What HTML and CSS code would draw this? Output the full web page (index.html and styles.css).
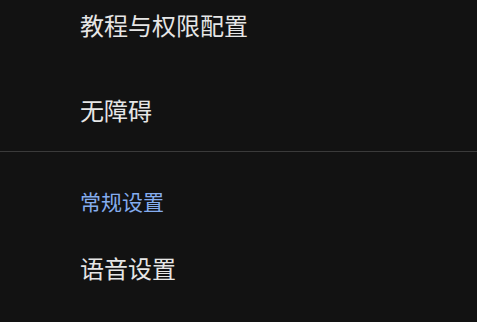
FILE: index.html
```html
<!DOCTYPE html>
<html lang="zh-CN">
<head>
<meta charset="utf-8">
<title>设置</title>
<link rel="stylesheet" href="styles.css">
</head>
<body>
<div class="settings">
  <div class="group">
    <div class="item item-first">教程与权限配置</div>
    <div class="item item-last">无障碍</div>
  </div>
  <div class="divider"></div>
  <div class="group">
    <div class="header">常规设置</div>
    <div class="item">语音设置</div>
  </div>
</div>
</body>
</html>
```
FILE: styles.css
```css
html, body {
  margin: 0;
  padding: 0;
  background: #121212;
}
body {
  width: 477px;
  height: 322px;
  overflow: hidden;
  font-family: "Noto Sans CJK SC", "Noto Sans", sans-serif;
}
.settings {
  display: flex;
  flex-direction: column;
}
.group {
  display: flex;
  flex-direction: column;
}
.item {
  padding: 0 0 0 80px;
  font-size: 24px;
  line-height: 32px;
  color: #e6e6e6;
}
.item-first {
  padding-top: 9px;
}
.item-last {
  margin-top: 53px;
  padding-bottom: 25px;
}
.divider {
  height: 1px;
  background: #3a3a3a;
}
.header {
  margin-top: 35px;
  padding-left: 80px;
  font-size: 21px;
  line-height: 28px;
  color: #84acee;
}
.header + .item {
  margin-top: 37px;
}
```
